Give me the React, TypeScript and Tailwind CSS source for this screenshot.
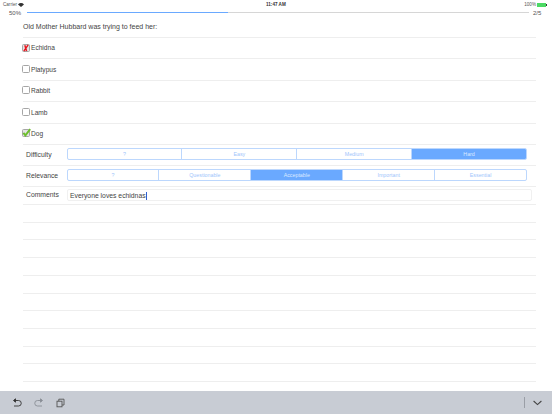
import React from "react";

const F = { fontFamily: '"Liberation Sans", Arial, sans-serif' };

function Check({ kind, label }: { kind?: "x" | "ok"; label: string }) {
  return (
    <div className="flex h-[21.4px] shrink-0 items-center border-b border-[#eeeeee]">
      <div className="relative -mt-[1px] -ml-[1px] h-[8px] w-[8px]">
        <div className={"absolute left-0 top-0 h-[8px] w-[8px] rounded-[1.5px] border border-[#a6a6a6] " + (kind ? "bg-[#e4e4e4]" : "bg-white")} />
        {kind === "x" && (
          <svg className="absolute left-0 top-0" width="8" height="8" viewBox="0 0 8 8">
            <path d="M2.8 1.2 L4.6 7 M6.2 0.8 L1.8 7.2" stroke="#e8141c" strokeWidth="1.4" fill="none" />
          </svg>
        )}
        {kind === "ok" && (
          <svg className="absolute -top-[1px] left-0 overflow-visible" width="9" height="9" viewBox="0 0 9 9">
            <path d="M1.4 4.8 L3.4 7.4 L8.2 1.2" stroke="#6cbf2c" strokeWidth="1.9" fill="none" />
          </svg>
        )}
      </div>
      <span className="ml-[1px] pt-[1px] text-[6.6px] leading-none text-[#444444]">{label}</span>
    </div>
  );
}

function Seg({ items, active }: { items: string[]; active: number }) {
  return (
    <div className="flex h-[12px] flex-1 overflow-hidden rounded-[2px] border border-[#bcd7fd]">
      {items.map((t, i) => (
        <div
          key={t}
          className={
            "flex flex-1 items-center justify-center text-[5.3px] leading-none " +
            (i === active ? "bg-[#6aa9ff] text-[#dbe9ff] " : "text-[#a0c5fb] ") +
            (i > 0 ? "border-l border-[#bcd7fd]" : "")
          }
        >
          {t}
        </div>
      ))}
    </div>
  );
}

function LabelRow({ label, children }: { label: string; children: React.ReactNode }) {
  return (
    <div className="flex h-[21px] shrink-0 items-center border-b border-[#eeeeee]">
      <div className="w-[43.5px] pl-[3px] text-[6.8px] leading-none text-[#444444]">{label}</div>
      <div className="mr-[9px] -mt-[1px] flex flex-1 items-center">{children}</div>
    </div>
  );
}

export default function App() {
  return (
    <div className="flex h-[414px] w-[552px] flex-col overflow-hidden bg-white" style={F}>
      <div className="relative flex h-[9px] shrink-0 items-center justify-between pl-[3px] pr-[5px] pt-[1px] text-[4.6px] leading-none text-[#555555]">
        <div className="flex items-center gap-[1px]">
          <span>Carrier</span>
          <svg width="6" height="4" viewBox="0 0 6 4">
            <path d="M0 1.4 A4 4 0 0 1 6 1.4 L3 4 Z" fill="#333333" />
          </svg>
        </div>
        <span className="absolute left-[266px] top-[2.5px] font-bold text-[#333333]">11:47 AM</span>
        <div className="flex items-center">
          <span>100%</span>
          <div className="ml-[1px] h-[3.5px] w-[9px] bg-[#4cd964]" />
          <div className="h-[2px] w-[1px] bg-[#333333]" />
        </div>
      </div>

      <div className="flex h-[7px] shrink-0 items-center text-[6px] leading-none text-[#555555]">
        <span className="ml-[9px] w-[18px]">50%</span>
        <div className="flex h-[1.5px] w-[502px] bg-[#d6d6d6]">
          <div className="h-full w-[201px] bg-[#6aa9ff]" />
        </div>
        <span className="ml-[4px]">2/5</span>
      </div>

      <div className="ml-[23px] mr-[16px] flex min-h-0 flex-1 flex-col">
        <div className="flex h-[22px] shrink-0 items-center border-b border-[#eeeeee] text-[7px] leading-none text-[#444444]">
          Old Mother Hubbard was trying to feed her:
        </div>
        <Check kind="x" label="Echidna" />
        <Check label="Platypus" />
        <Check label="Rabbit" />
        <Check label="Lamb" />
        <Check kind="ok" label="Dog" />
        <LabelRow label="Difficulty">
          <Seg items={["?", "Easy", "Medium", "Hard"]} active={3} />
        </LabelRow>
        <LabelRow label="Relevance">
          <Seg items={["?", "Questionable", "Acceptable", "Important", "Essential"]} active={2} />
        </LabelRow>
        <div className="flex h-[18px] shrink-0 items-center border-b border-[#eeeeee]">
          <div className="w-[43.5px] pl-[3px] text-[6.8px] leading-none text-[#444444]">Comments</div>
          <div className="mr-[4px] flex h-[12px] flex-1 items-center rounded-[2px] border border-[#f0f0f0] pl-[2.5px] pt-[1px] text-[6.8px] leading-none text-[#444444]">
            Everyone loves echidnas
            <span className="h-[8px] w-[1px] bg-[#3060d0]" />
          </div>
        </div>
        {Array.from({ length: 10 }).map((_, i) => (
          <div key={i} className="h-[17.72px] shrink-0 border-b border-[#eeeeee]" />
        ))}
      </div>

      <div className="flex h-[23px] shrink-0 items-center bg-[#c8ccd4] pl-[12px] pr-[10px]">
        <svg width="10" height="10" viewBox="0 0 10 10" fill="none" stroke="#333333" strokeWidth="0.9">
          <path d="M2 2.5 H6.5 A2.7 2.7 0 0 1 6.5 8 H2" />
          <path d="M3.5 0.8 L1.5 2.5 L3.5 4.2 Z" fill="#333333" />
        </svg>
        <svg className="ml-[12px]" width="10" height="10" viewBox="0 0 10 10" fill="none" stroke="#8a8e96" strokeWidth="0.9">
          <path d="M8 2.5 H3.5 A2.7 2.7 0 0 0 3.5 8 H8" />
          <path d="M6.5 0.8 L8.5 2.5 L6.5 4.2 Z" fill="#8a8e96" />
        </svg>
        <svg className="ml-[12px]" width="9" height="10" viewBox="0 0 9 10" fill="none" stroke="#555555" strokeWidth="0.9">
          <rect x="1" y="3.2" width="5" height="5.6" fill="#c8ccd4" />
          <path d="M2.8 3.2 V1.2 H8 V7 H6" />
        </svg>
        <div className="ml-auto h-[11px] w-px bg-[#9a9ea6]" />
        <svg className="ml-[8px]" width="9" height="6" viewBox="0 0 9 6" fill="none" stroke="#444444" strokeWidth="1.1">
          <path d="M0.6 1 L4.5 4.6 L8.4 1" />
        </svg>
      </div>
    </div>
  );
}
